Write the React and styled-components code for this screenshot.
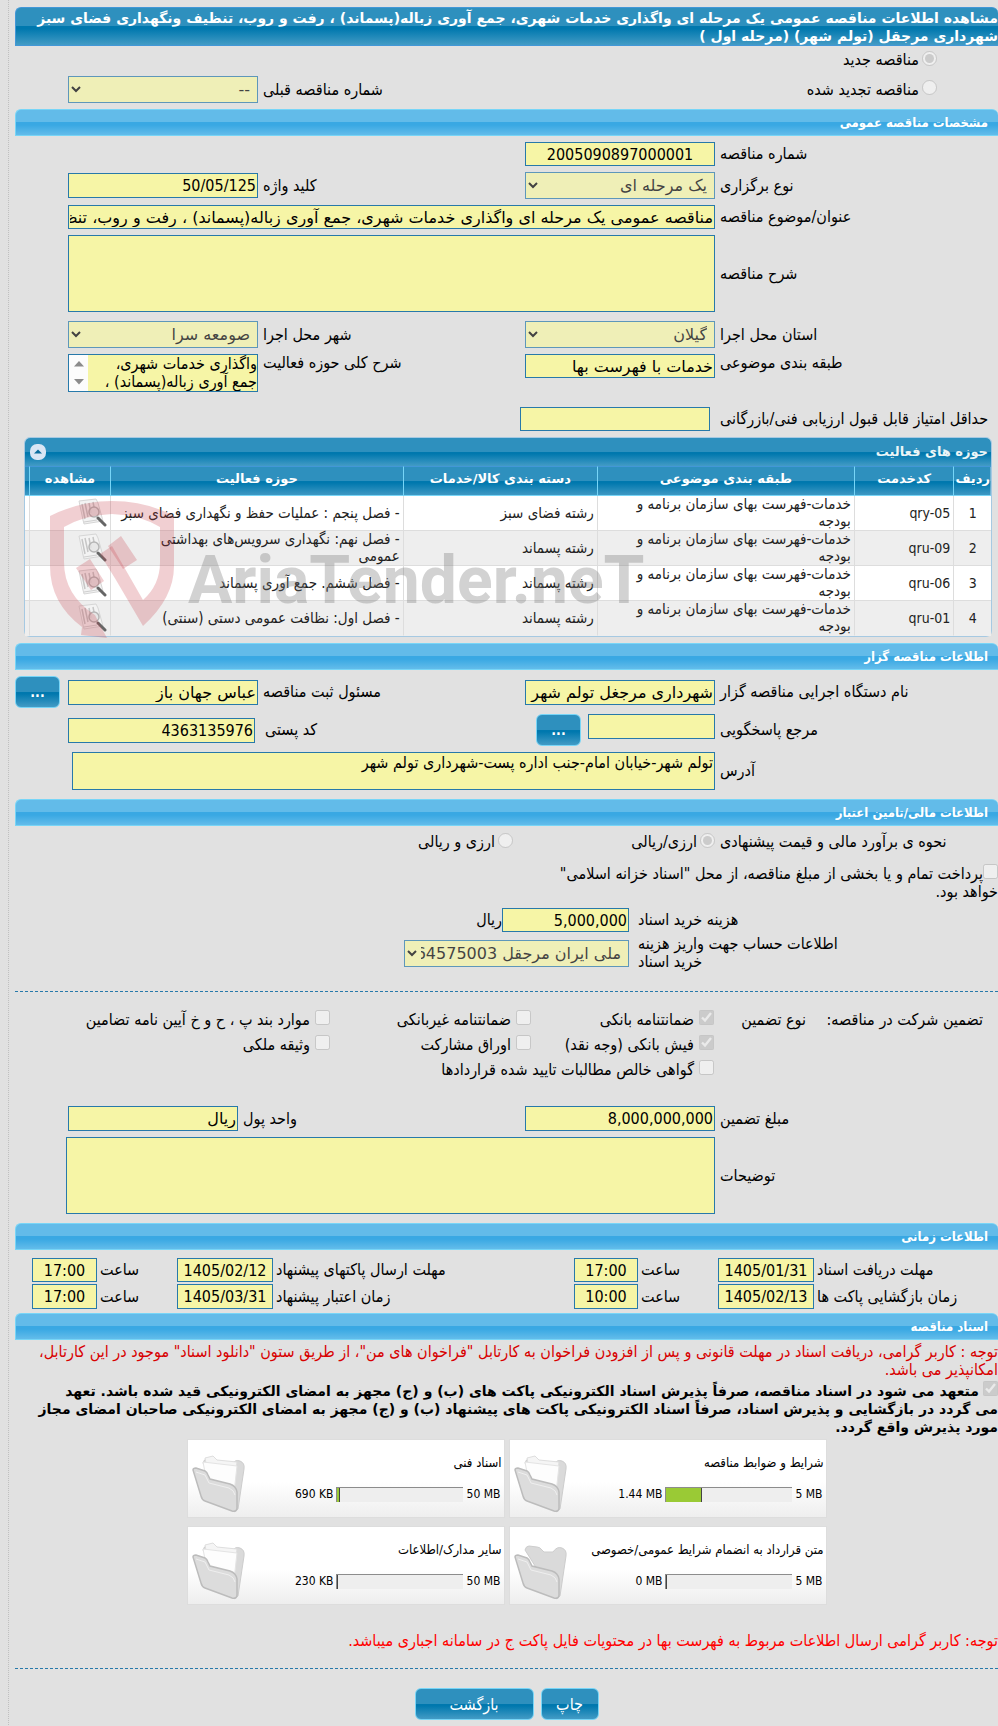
import React, { useId } from "react"
import styled, { createGlobalStyle, css } from "styled-components"

const GlobalStyle = createGlobalStyle`
  * {
    box-sizing: border-box;
  }

  body {
    margin: 0;
    background: #e1e1e1;
    color: #000;
    overflow-x: hidden;
  }

  body, input, select, textarea, button {
    font-family: "DejaVu Sans Condensed", "DejaVu Sans", sans-serif;
  }
`

const wideFont = css`
  font-family: "DejaVu Sans", sans-serif;
`

const darkGloss = css`
  background: linear-gradient(#2e90be 0, #2e90be 50%, #0078ae 50%, #0078ae 56%, #439bc5 100%);
`

const Page = styled.main`
  direction: rtl;
  margin-left: 8px;
  padding: 7px 0 5px 6px;
  border-left: 1px dotted #c0c0c0;
  font-size: 16px;
  line-height: 18px;
`

const PageTitle = styled.h1`
  ${wideFont}
  ${darkGloss}
  margin: 0;
  padding: 1px 0 0;
  border: 1px solid #4297d7;
  border-width: 1px 0 1px 1px;
  border-radius: 6px 6px 0 0;
  color: #fff;
  font-size: 14px;
  font-weight: bold;
  line-height: 18px;
`

const SectionTitle = styled.h2`
  margin: ${p => p.$top || 6}px 0 0;
  padding: 0 10px;
  border: 1px solid #77d5f7;
  border-width: 1px 0 1px 1px;
  border-radius: 6px 6px 0 0;
  background: linear-gradient(#62bbe9 0, #62bbe9 48%, #39a8e3 48%, #39a8e3 60%, #63bcea 100%);
  color: #fff;
  font-size: 13px;
  line-height: 25px;
`

const Row = styled.div`
  display: grid;
  grid-template-columns: ${p => p.$cols || "283fr 190fr 267fr 190fr 53fr"};
  align-items: ${p => p.$align || "center"};
  margin-top: ${p => (p.$top === undefined ? 6 : p.$top)}px;
  min-height: ${p => p.$height || 24}px;

  > * {
    min-width: 0;
  }
`

const wideCols = "283fr 647fr 53fr"

const Label = styled.label`
  padding-left: ${p => p.$gap || 5}px;
  text-align: left;
  white-space: nowrap;
`

const fieldBox = css`
  display: block;
  width: 100%;
  margin: 0;
  border: 1px solid #2779aa;
  border-radius: 0;
  background: #f6f5a6;
  color: #000;
  outline: none;
`

const Input = styled.input`
  ${fieldBox}
  ${p => p.$words && wideFont}
  height: ${p => p.$height || 24}px;
  padding: 0 1px;
  font-size: 16px;
  text-align: ${p => (p.$center ? "center" : "right")};
`

const Select = styled.select`
  ${fieldBox}
  ${wideFont}
  height: 27px;
  padding: 0 3px 0 0;
  font-size: 16px;
  opacity: 0.7;
`

const Area = styled.textarea`
  ${fieldBox}
  height: ${p => p.$height || 77}px;
  padding: 1px;
  font-size: 16px;
  line-height: 18px;
  resize: none;
  overflow: hidden;
`

const ScrollBox = styled.div`
  display: flex;
  border: 1px solid #2779aa;

  textarea {
    flex: 1;
    min-width: 0;
    height: 36px;
    border: 0;
    padding: 0;
  }
`

const ScrollRail = styled.div`
  display: flex;
  flex-direction: column;
  justify-content: space-between;
  align-items: center;
  width: 19px;
  padding: 6px 0;
  background: #fcfcfc;
`

const Option = styled.label`
  display: flex;
  align-items: center;
  gap: ${p => p.$gap || 3}px;
  padding-right: ${p => p.$indent || 0}px;
  white-space: nowrap;

  input {
    flex: none;
    width: 15px;
    height: 15px;
    margin: 0 0 4px;
  }
`

const Treasury = styled.label`
  display: block;
  width: 48%;
  margin-top: 12px;

  input {
    width: 15px;
    height: 15px;
    margin: 0;
    vertical-align: 0;
  }
`

const Divider = styled.hr`
  margin: ${p => p.$top}px 0 0;
  border: 0;
  border-top: 1px dashed #2779aa;
`

const Button = styled.button`
  ${darkGloss}
  width: ${p => p.$width}px;
  height: 32px;
  padding: 0;
  border: 1px solid #77d5f7;
  border-radius: 6px;
  color: #fff;
  font-size: 16px;
`

const MoreButton = styled(Button)`
  width: 45px;
  font-size: 14px;
  font-weight: bold;
`

const WithButton = styled.div`
  display: flex;
  align-items: flex-start;
  gap: 7px;

  input {
    flex: 1;
    min-width: 0;
  }
`

const Panel = styled.section`
  position: relative;
  margin: 6px 6px 0 9px;
  border: 1px solid #a6c9e2;
  border-radius: 6px;
  background: #fff;
`

const PanelTitle = styled.header`
  ${wideFont}
  ${darkGloss}
  display: flex;
  justify-content: space-between;
  align-items: center;
  height: 28px;
  padding: 0 3px 0 5px;
  border-radius: 5px 5px 0 0;
  color: #eaf5f7;
  font-size: 13px;
  font-weight: bold;
`

const Collapse = styled.button`
  display: flex;
  width: 16px;
  height: 16px;
  padding: 0;
  border: 0;
  background: none;
`

const Table = styled.table`
  width: 100%;
  border-collapse: separate;
  border-spacing: 0;
  table-layout: fixed;
  color: #222;

  thead tr {
    ${darkGloss}
  }

  th {
    ${wideFont}
    height: 30px;
    padding: 0 0 4px;
    border-top: 1px solid #4297d7;
    border-bottom: 1px solid #77d5f7;
    border-left: 1px solid #77d5f7;
    color: #fff;
    font-size: 13px;
    white-space: nowrap;
  }

  td {
    height: 35px;
    padding: 0 3px 0 8px;
    border-left: 1px solid #ddd;
    border-bottom: 1px solid #ddd;
    font-size: 15px;
    line-height: 17px;
  }

  th:last-child, td:last-child {
    padding: 0;
    border-left: 0;
  }

  tbody tr:nth-child(even) {
    background: #eee;
  }

  tbody tr:last-child td {
    border-bottom-color: #eee;
  }

  bdi {
    font-size: 14px;
  }

  svg {
    display: block;
  }
`

const NumberCell = styled.td`
  && {
    padding: 0;
    font-size: 14px;
    text-align: center;
  }
`

/* sits over the table rows */
const Watermark = styled.svg`
  position: absolute;
  left: 25px;
  top: 58px;
  pointer-events: none;
`

const Notice = styled.p`
  margin: ${p => p.$top}px 0 0;
  color: ${p => p.$color || "#000"};
`

const Pledge = styled.label`
  ${wideFont}
  display: block;
  margin-top: 2px;
  font-size: 14px;
  font-weight: bold;

  input {
    width: 15px;
    height: 15px;
    margin: 0 0 0 4px;
    vertical-align: 0;
  }
`

const Cards = styled.div`
  display: grid;
  grid-template-columns: 318px 318px;
  justify-content: center;
  gap: 8px 4px;
  margin-top: 3px;
`

const Card = styled.article`
  display: flex;
  align-items: flex-start;
  height: 79px;
  padding: 14px 2px 0 3px;
  border: 1px solid #ddd;
  background: linear-gradient(#fff 0, #fff 55%, #eee 100%);
  font-size: 12px;
`

const CardBody = styled.div`
  flex: 1;
  white-space: nowrap;

  h3 {
    margin: 0;
    font-size: 13px;
    font-weight: normal;
    line-height: 18px;
  }
`

const Usage = styled.div`
  display: flex;
  align-items: center;
  gap: 2px;
  margin-top: 14px;
  padding-right: 1px;
  line-height: 16px;
`

const Limit = styled.span`
  width: ${p => (p.$wide ? 36 : 29)}px;
  direction: ltr;
  text-align: right;
`

const Track = styled.div`
  width: 127px;
  height: 15px;
  direction: ltr;
  border-top: 1px solid #8c8c8c;
  border-left: 1px solid #8c8c8c;
  background: #eee;
`

const Fill = styled.div`
  height: 100%;
  border-right: 1px solid #444;
  background: #9aca35;
`

const Actions = styled.footer`
  display: flex;
  justify-content: center;
  gap: 7px;
  margin-top: 19px;
`

const services = [
  ["qry-05", "رشته فضای سبز", "- فصل پنجم : عملیات حفظ و نگهداری فضای سبز"],
  ["qru-09", "رشته پسماند", "- فصل نهم: نگهداری سرویس‌های بهداشتی عمومی"],
  ["qru-06", "رشته پسماند", "- فصل ششم. جمع آوری پسماند"],
  ["qru-01", "رشته پسماند", "- فصل اول: نظافت عمومی دستی (سنتی)"],
]

const documents = [
  { title: "شرایط و ضوابط مناقصه", limit: "5 MB", used: "1.44 MB", percent: 29, full: true },
  { title: "اسناد فنی", limit: "50 MB", used: "690 KB", percent: 3, full: true },
  { title: "متن قرارداد به انضمام شرایط عمومی/خصوصی", limit: "5 MB", used: "0 MB", percent: 0 },
  { title: "سایر مدارک/اطلاعات", limit: "50 MB", used: "230 KB", percent: 1, full: true },
]

const Field = ({ label, value = "", gap, height, center, words }) => {
  const id = useId()
  return (
    <>
      <Label htmlFor={id} $gap={gap}>{label}</Label>
      <Input id={id} defaultValue={value} readOnly $height={height} $center={center} $words={words} />
    </>
  )
}

const SelectField = ({ label, value, gap }) => {
  const id = useId()
  return (
    <>
      <Label htmlFor={id} $gap={gap}>{label}</Label>
      <Select id={id} disabled>
        <option>{value}</option>
      </Select>
    </>
  )
}

const AreaField = ({ label, value = "", height }) => {
  const id = useId()
  return (
    <>
      <Label htmlFor={id}>{label}</Label>
      <Area id={id} defaultValue={value} readOnly $height={height} />
    </>
  )
}

const Radio = ({ children, checked, name, indent }) => (
  <Option $indent={indent}>
    <input type="radio" name={name} defaultChecked={checked} disabled />
    {children}
  </Option>
)

const Check = ({ children, checked }) => (
  <Option $gap={5}>
    <input type="checkbox" defaultChecked={checked} disabled />
    {children}
  </Option>
)

const Arrow = ({ down }) => (
  <svg width="10" height="6" viewBox="0 0 10 6">
    <path d={down ? "M0 0h10L5 5.500z" : "M0 5.500h10L5 0z"} fill="#8b8b8b" />
  </svg>
)

const ViewIcon = () => (
  <svg width="30" height="30" viewBox="0 0 30 30">
    <path d="M2 3 19 1l2 4 5 18-19 3-1-4z" fill="#f3f3f3" stroke="#d6d6d6" />
    <path d="M5 6l3 15M8 5l3 14M12 5l2 10M16 4l1 5" stroke="#c6c6c6" strokeWidth="1.500" fill="none" />
    <path d="M7 24l13-2" stroke="#cfcfcf" />
    <circle cx="17" cy="14" r="5" fill="#e4e4e4" fillOpacity=".8" stroke="#b5b5b5" strokeWidth="1.500" />
    <path d="M21 20l7 7" stroke="#666" strokeWidth="3" strokeLinecap="round" />
  </svg>
)

const FolderIcon = ({ full }) => (
  <svg width="56" height="60" viewBox="0 0 56 60">
    <path d="M12 9q1-4 4-4l8 1q3 0 5 3l2 2h9q4-6 9-4 5 2 4 8l-6 40-4 3z" fill="#dadada" stroke="#cdcdcd" />
    {full && (
      <>
        <path d="M14 4l8-2 4 4 20 2-4 38-22-8z" fill="#f5f5f5" stroke="#dedede" />
        <path d="M12 8l34 4-4 36-24-9z" fill="#fdfdfd" stroke="#e4e4e4" />
      </>
    )}
    <path d="M2 16q0-2 3-2l9 3q2 1 3 4l2 4 20 5q6 2 7 8v16q0 4-5 3L14 47q-3-1-4-5z" fill="#dcdcdc" stroke="#bcbcbc" strokeWidth="1.500" />
    <path d="M5 18l9 3 4 8 20 5q5 2 6 7" fill="none" stroke="#efefef" />
  </svg>
)

const AriaTender = () => (
  <Watermark width="650" height="142" viewBox="0 0 650 142" aria-hidden="true">
    <g fill="#c8404d" fillOpacity=".25">
      <path d="M0 20Q30 5 62 5q34 0 62 15v50q0 32-31 60L66 84 50 58l12-8 31 54q17-15 17-38V31Q90 19 62 18 35 19 14 31v35q0 33 31 53l6 12 6 11-26-3 1-8Q0 107 0 70z" />
      <path d="M26 72l14-9 14 22-13 9zM58 50l13-10 16 24-14 9z" />
    </g>
    <text
      x="138"
      y="107"
      direction="ltr"
      fontFamily="Roboto"
      fontWeight="700"
      fontSize="66"
      fill="#777"
      fillOpacity=".33"
    >
      AriaTender.neT
    </text>
  </Watermark>
)

const DocumentCard = ({ title, limit, used, percent, full }) => (
  <Card>
    <CardBody>
      <h3>{title}</h3>
      <Usage>
        <Limit $wide={limit.length > 4}>{limit}</Limit>
        <Track>
          <Fill style={{ width: `${percent}%` }} />
        </Track>
        <span dir="ltr">{used}</span>
      </Usage>
    </CardBody>
    <FolderIcon full={full} />
  </Card>
)

const timeCols = "184fr 96fr 80fr 64fr 301fr 96fr 80fr 65fr 17fr"
const guaranteeCols = "183fr 101fr 183fr 201fr 315fr"
const costCols = "369fr 127fr 487fr"

const App = () => (
  <>
    <GlobalStyle />
    <Page lang="fa">
      <PageTitle>
        مشاهده اطلاعات مناقصه عمومی یک مرحله ای واگذاری خدمات شهری، جمع آوری زباله(پسماند) ، رفت و روب، تنظیف ونگهداری فضای سبز شهرداری مرجقل (تولم شهر) (مرحله اول )
      </PageTitle>
      <Row $top={0} $height={28} $cols="1fr">
        <Radio name="kind" checked indent={61}>مناقصه جدید</Radio>
      </Row>
      <Row $top={2} $height={27} $cols="473fr 267fr 190fr 53fr">
        <Radio name="kind" indent={61}>مناقصه تجدید شده</Radio>
        <SelectField label="شماره مناقصه قبلی" value="--" />
      </Row>

      <SectionTitle>مشخصات مناقصه عمومی</SectionTitle>
      <Row>
        <Field label="شماره مناقصه" value="2005090897000001" center />
      </Row>
      <Row $height={27}>
        <SelectField label="نوع برگزاری" value="یک مرحله ای" />
        <Field label="کلید واژه" value="50/05/125" height={25} />
      </Row>
      <Row $cols={wideCols}>
        <Field
          label="عنوان/موضوع مناقصه"
          value="مناقصه عمومی یک مرحله ای واگذاری خدمات شهری، جمع آوری زباله(پسماند) ، رفت و روب، تنظیف ونگهداری فضای سبز شهرداری"
          words
        />
      </Row>
      <Row $cols={wideCols}>
        <AreaField label="شرح مناقصه" />
      </Row>
      <Row $top={9} $height={27}>
        <SelectField label="استان محل اجرا" value="گیلان" />
        <SelectField label="شهر محل اجرا" value="صومعه سرا" />
      </Row>
      <Row $height={38} $align="start">
        <Field label="طبقه بندی موضوعی" value="خدمات با فهرست بها" words />
        <Label htmlFor="scope">شرح کلی حوزه فعالیت</Label>
        <ScrollBox>
          <Area id="scope" readOnly defaultValue="واگذاری خدمات شهری، جمع آوری زباله(پسماند) ، رفت و روب" />
          <ScrollRail>
            <Arrow />
            <Arrow down />
          </ScrollRail>
        </ScrollBox>
      </Row>
      <Row $top={15} $cols="288fr 190fr 505fr">
        <Field label="حداقل امتیاز قابل قبول ارزیابی فنی/بازرگانی" gap={10} />
      </Row>

      <Panel>
        <PanelTitle>
          حوزه های فعالیت
          <Collapse type="button" aria-label="بستن">
            <svg width="16" height="16" viewBox="0 0 16 16">
              <rect width="16" height="16" rx="7" fill="#d9e6f4" />
              <path d="M4 9.500L8 5.500l4 4z" fill="#0b6d9e" />
            </svg>
          </Collapse>
        </PanelTitle>
        <Table>
          <colgroup>
            <col style={{ width: "3.9%" }} />
            <col style={{ width: "10.3%" }} />
            <col style={{ width: "26.6%" }} />
            <col style={{ width: "20.1%" }} />
            <col style={{ width: "30.3%" }} />
            <col style={{ width: "8.4%" }} />
            <col />
          </colgroup>
          <thead>
            <tr>
              <th>ردیف</th>
              <th>کدخدمت</th>
              <th>طبقه بندی موضوعی</th>
              <th>دسته بندی کالا/خدمات</th>
              <th>حوزه فعالیت</th>
              <th>مشاهده</th>
              <th></th>
            </tr>
          </thead>
          <tbody>
            {services.map(([code, category, field], i) => (
              <tr key={code}>
                <NumberCell>{i + 1}</NumberCell>
                <td><bdi>{code}</bdi></td>
                <td>خدمات-فهرست بهای سازمان برنامه و بودجه</td>
                <td>{category}</td>
                <td>{field}</td>
                <td><ViewIcon /></td>
                <td></td>
              </tr>
            ))}
          </tbody>
        </Table>
        <AriaTender />
      </Panel>

      <SectionTitle>اطلاعات مناقصه گزار</SectionTitle>
      <Row $height={32} $cols="283fr 190fr 267fr 190fr 8px 45px">
        <Field label="نام دستگاه اجرایی مناقصه گزار" value="شهرداری مرجغل تولم شهر" height={25} words />
        <Field label="مسئول ثبت مناقصه" value="عباس جهان باز" height={25} words />
        <span />
        <MoreButton type="button">...</MoreButton>
      </Row>
      <Row $height={32} $cols="283fr 179fr 281fr 187fr 53fr">
        <Label htmlFor="contact">مرجع پاسخگویی</Label>
        <WithButton>
          <Input id="contact" readOnly $height={25} />
          <MoreButton type="button">...</MoreButton>
        </WithButton>
        <Field label="کد پستی" value="4363135976" height={25} gap={10} />
      </Row>
      <Row $cols="283fr 643fr 57fr">
        <AreaField label="آدرس" height={38} value="تولم شهر-خیابان امام-جنب اداره پست-شهرداری تولم شهر" />
      </Row>

      <SectionTitle $top={9}>اطلاعات مالی/تامین اعتبار</SectionTitle>
      <Row $height={20} $cols="283fr 202fr 498fr">
        <Label as="span">نحوه ی برآورد مالی و قیمت پیشنهادی</Label>
        <Radio name="currency" checked>ارزی/ریالی</Radio>
        <Radio name="currency">ارزی و ریالی</Radio>
      </Row>
      <Treasury>
        <input type="checkbox" disabled />
        پرداخت تمام و یا بخشی از مبلغ مناقصه، از محل "اسناد خزانه اسلامی" خواهد بود.
      </Treasury>
      <Row $top={7} $cols={costCols}>
        <Field label="هزینه خرید اسناد" value="5,000,000" gap={9} />
        <span>ریال</span>
      </Row>
      <Row $top={3} $height={36} $cols="369fr 225fr 389fr">
        <SelectField
          label={<>اطلاعات حساب جهت واریز هزینه<br />خرید اسناد</>}
          value="ملی ایران مرجقل 64575003"
          gap={9}
        />
      </Row>
      <Divider $top={20} />

      <Row $top={15} $height={25} $cols={guaranteeCols}>
        <span style={{ paddingRight: 15 }}>تضمین شرکت در مناقصه:</span>
        <span style={{ paddingRight: 9 }}>نوع تضمین</span>
        <Check checked>ضمانتنامه بانکی</Check>
        <Check>ضمانتنامه غیربانکی</Check>
        <Check>موارد بند پ ، ح و خ آیین نامه تضامین</Check>
      </Row>
      <Row $top={0} $height={25} $cols={guaranteeCols}>
        <span />
        <span />
        <Check checked>فیش بانکی (وجه نقد)</Check>
        <Check>اوراق مشارکت</Check>
        <Check>وثیقه ملکی</Check>
      </Row>
      <Row $top={0} $height={25} $cols={guaranteeCols}>
        <span />
        <span />
        <Check>گواهی خالص مطالبات تایید شده قراردادها</Check>
      </Row>

      <Row $top={24} $height={25} $cols="283fr 190fr 287fr 170fr 53fr">
        <Field label="مبلغ تضمین" value="8,000,000,000" height={25} />
        <Field label="واحد پول" value="ریال" height={25} words />
      </Row>
      <Row $cols="283fr 649fr 51fr">
        <AreaField label="توضیحات" />
      </Row>

      <SectionTitle $top={9}>اطلاعات زمانی</SectionTitle>
      <Row $top={8} $cols={timeCols}>
        <Field label="مهلت دریافت اسناد" value="1405/01/31" gap={3} center />
        <Field label="ساعت" value="17:00" gap={3} center />
        <Field label="مهلت ارسال پاکتهای پیشنهاد" value="1405/02/12" gap={3} center />
        <Field label="ساعت" value="17:00" gap={3} center />
      </Row>
      <Row $top={2} $cols={timeCols} $height={25}>
        <Field label="زمان بازگشایی پاکت ها" value="1405/02/13" gap={3} height={25} center />
        <Field label="ساعت" value="10:00" gap={3} height={25} center />
        <Field label="زمان اعتبار پیشنهاد" value="1405/03/31" gap={3} height={25} center />
        <Field label="ساعت" value="17:00" gap={3} height={25} center />
      </Row>

      <SectionTitle $top={4}>اسناد مناقصه</SectionTitle>
      <Notice $top={3} $color="#d80000">
        توجه : کاربر گرامی، دریافت اسناد در مهلت قانونی و پس از افزودن فراخوان به کارتابل "فراخوان های من"، از طریق ستون "دانلود اسناد" موجود در این کارتابل، امکانپذیر می باشد.
      </Notice>
      <Pledge>
        <input type="checkbox" defaultChecked disabled />
        متعهد می شود در اسناد مناقصه، صرفاً پذیرش اسناد الکترونیکی پاکت های (ب) و (ج) مجهز به امضای الکترونیکی قید شده باشد. تعهد
        <br />
        می گردد در بازگشایی و پذیرش اسناد، صرفاً اسناد الکترونیکی پاکت های پیشنهاد (ب) و (ج) مجهز به امضای الکترونیکی صاحبان امضای مجاز
        <br />
        مورد پذیرش واقع گردد.
      </Pledge>
      <Cards>
        {documents.map(doc => (
          <DocumentCard key={doc.title} {...doc} />
        ))}
      </Cards>
      <Notice $top={27} $color="#f00">
        توجه: کاربر گرامی ارسال اطلاعات مربوط به فهرست بها در محتویات فایل پاکت ج در سامانه اجباری میباشد.
      </Notice>
      <Divider $top={18} />
      <Actions>
        <Button type="button" $width={58}>چاپ</Button>
        <Button type="button" $width={119}>بازگشت</Button>
      </Actions>
    </Page>
  </>
)

export default App
